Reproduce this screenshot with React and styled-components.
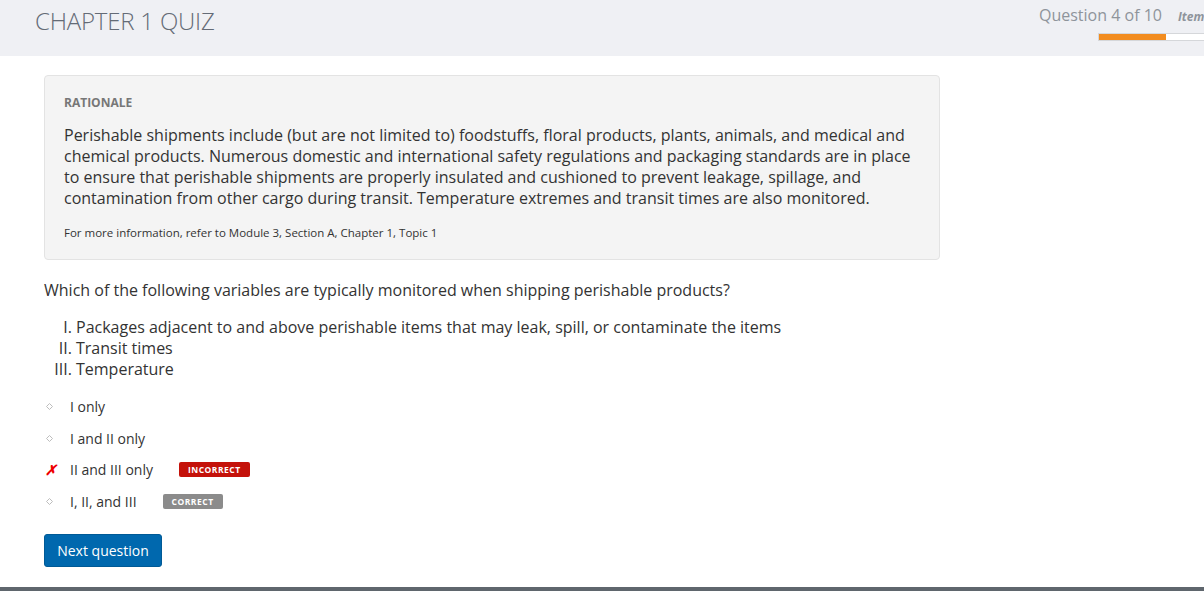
import React from "react";
import styled, { createGlobalStyle } from "styled-components";

const Global = createGlobalStyle`
  html, body { margin: 0; padding: 0; background: #fff; }
  body { font-family: "Open Sans", "Liberation Sans", sans-serif; color: #333; overflow: hidden; }
`;

const Page = styled.div`
  min-height: 100vh;
  display: flex;
  flex-direction: column;
`;

const Header = styled.header`
  height: 56px;
  background: #eff0f4;
  display: flex;
  justify-content: space-between;
  padding-left: 35px;
  box-sizing: border-box;
`;

const Title = styled.h1`
  margin: 0;
  padding-top: 4px;
  font-size: 24px;
  font-weight: 300;
  color: #646b76;
  letter-spacing: -0.2px;
`;

const Status = styled.div`
  display: flex;
  flex-direction: column;
  align-items: flex-end;
  padding-top: 4px;
`;

const StatusLine = styled.div`
  display: flex;
  align-items: baseline;
  gap: 16px;
  white-space: nowrap;
  width: 165px;
  overflow: hidden;
`;

const QCount = styled.span`
  font-size: 16px;
  color: #8e949b;
`;

const ItemLabel = styled.span`
  font-size: 12px;
  font-style: italic;
  font-weight: 700;
  color: #8e949b;
`;

const Progress = styled.div`
  margin-top: 7px;
  width: 106px;
  height: 8px;
  background: #fff;
  border: 1px solid #d5d7da;
  border-right: none;
  box-sizing: border-box;
`;

const ProgressFill = styled.div`
  height: 100%;
  background: #f28c1f;
`;

const Main = styled.main`
  flex: 1;
  padding: 19px 0 0 44px;
`;

const Rationale = styled.section`
  width: 896px;
  box-sizing: border-box;
  background: #f4f4f4;
  border: 1px solid #e3e3e3;
  border-radius: 4px;
  padding: 18px 20px 18px 19px;
`;

const RationaleHead = styled.div`
  font-size: 12px;
  font-weight: 700;
  color: #777;
  line-height: 18px;
`;

const RationaleText = styled.p`
  margin: 13px 0 0;
  font-size: 16px;
  line-height: 21px;
  color: #333;
`;

const MoreInfo = styled.p`
  margin: 16px 0 0;
  font-size: 11.5px;
  line-height: 16px;
  color: #333;
`;

const Question = styled.p`
  margin: 20px 0 0;
  font-size: 16px;
  line-height: 21px;
`;

const Statements = styled.ol`
  list-style: upper-roman;
  margin: 16px 0 0;
  padding-left: 32px;
  font-size: 16px;
  line-height: 21px;
`;

const Options = styled.ul`
  list-style: none;
  margin: 11px 0 0;
  padding: 0;
`;

const Option = styled.li`
  display: flex;
  align-items: center;
  height: 31.6px;
  font-size: 14px;
`;

const Marker = styled.span`
  width: 26px;
  display: flex;
  align-items: center;
  padding-left: ${(p) => (p.$wrong ? "1px" : "2px")};
  box-sizing: border-box;
`;

const Cross = styled.span`
  color: #e00;
  font-size: 14px;
  font-weight: 700;
  font-style: italic;
  line-height: 1;
`;

const OptionText = styled.span`
  color: #333;
`;

const Badge = styled.span`
  margin-left: ${(p) => p.$gap}px;
  padding: 0 9px;
  height: 15px;
  line-height: 15px;
  border-radius: 2px;
  font-size: 8.5px;
  font-weight: 700;
  letter-spacing: 0.5px;
  color: #fff;
  background: ${(p) => p.$bg};
`;

const NextButton = styled.button`
  margin-top: 17px;
  width: 118px;
  height: 33px;
  background: #0068ae;
  color: #fff;
  border: 1px solid #005a96;
  border-radius: 3px;
  font-family: "Open Sans", "Liberation Sans", sans-serif;
  font-size: 14px;
  padding: 0;
  cursor: pointer;
`;

const Footer = styled.div`
  height: 4px;
  background: #5f666d;
`;

const Diamond = () => (
  <svg width="7" height="7" viewBox="0 0 7 7">
    <path d="M3.5 0.5 L6.5 3.5 L3.5 6.5 L0.5 3.5 Z" fill="none" stroke="#bdbdbd" strokeWidth="1" />
  </svg>
);

const options = [
  { text: "I only" },
  { text: "I and II only" },
  { text: "II and III only", wrong: true, badge: "INCORRECT", bg: "#c4120a", gap: 26 },
  { text: "I, II, and III", badge: "CORRECT", bg: "#8b8b8b", gap: 26 },
];

export default function App() {
  return (
    <Page>
      <Global />
      <Header>
        <Title>CHAPTER 1 QUIZ</Title>
        <Status>
          <StatusLine>
            <QCount>Question 4 of 10</QCount>
            <ItemLabel>Item</ItemLabel>
          </StatusLine>
          <Progress>
            <ProgressFill style={{ width: `${(4 / 6.3) * 100}%` }} />
          </Progress>
        </Status>
      </Header>
      <Main>
        <Rationale>
          <RationaleHead>RATIONALE</RationaleHead>
          <RationaleText>
            Perishable shipments include (but are not limited to) foodstuffs, floral products, plants, animals, and medical and
            chemical products. Numerous domestic and international safety regulations and packaging standards are in place
            to ensure that perishable shipments are properly insulated and cushioned to prevent leakage, spillage, and
            contamination from other cargo during transit. Temperature extremes and transit times are also monitored.
          </RationaleText>
          <MoreInfo>For more information, refer to Module 3, Section A, Chapter 1, Topic 1</MoreInfo>
        </Rationale>
        <Question>Which of the following variables are typically monitored when shipping perishable products?</Question>
        <Statements>
          <li>Packages adjacent to and above perishable items that may leak, spill, or contaminate the items</li>
          <li>Transit times</li>
          <li>Temperature</li>
        </Statements>
        <Options>
          {options.map((o) => (
            <Option key={o.text}>
              <Marker $wrong={o.wrong}>{o.wrong ? <Cross>✗</Cross> : <Diamond />}</Marker>
              <OptionText>{o.text}</OptionText>
              {o.badge && (
                <Badge $bg={o.bg} $gap={o.gap}>
                  {o.badge}
                </Badge>
              )}
            </Option>
          ))}
        </Options>
        <NextButton>Next question</NextButton>
      </Main>
      <Footer />
    </Page>
  );
}
